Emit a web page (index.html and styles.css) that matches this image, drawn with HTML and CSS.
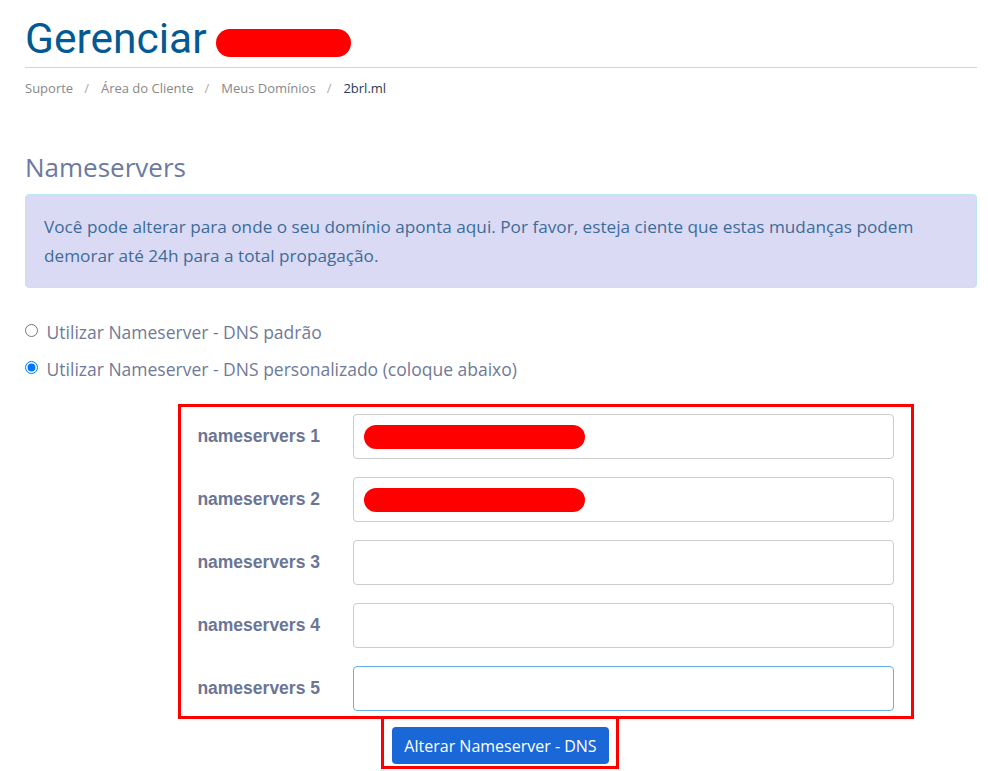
FILE: index.html
```html
<!DOCTYPE html>
<html lang="pt-BR">
<head>
    <meta charset="UTF-8">
    <meta name="viewport" content="width=device-width, initial-scale=1.0">
    <link rel="stylesheet" href="styles.css">
    <title>Gerenciar Domínio</title>
</head>
<body>
    <div class="page">
        <div class="page-header">
            <h1 class="title">Gerenciar <span class="redact title-redact"></span></h1>
        </div>

        <ol class="breadcrumb">
            <li><a href="#">Suporte</a></li>
            <li><a href="#">Área do Cliente</a></li>
            <li><a href="#">Meus Domínios</a></li>
            <li class="active">2brl.ml</li>
        </ol>

        <h2 class="section-title">Nameservers</h2>

        <div class="alert">
            Você pode alterar para onde o seu domínio aponta aqui. Por favor, esteja ciente que estas mudanças podem demorar até 24h para a total propagação.
        </div>

        <form id="NsForm">
            <label class="radio"><input type="radio" name="nschoice" value="default"> Utilizar Nameserver - DNS padrão</label>
            <label class="radio"><input type="radio" name="nschoice" value="custom" checked> Utilizar Nameserver - DNS personalizado (coloque abaixo)</label>

            <div class="ns-box">
                <div class="ns-row">
                    <label for="ns1">nameservers 1</label>
                    <div class="field">
                        <input type="text" id="ns1" name="ns1">
                        <span class="redact field-redact"></span>
                    </div>
                </div>
                <div class="ns-row">
                    <label for="ns2">nameservers 2</label>
                    <div class="field">
                        <input type="text" id="ns2" name="ns2">
                        <span class="redact field-redact"></span>
                    </div>
                </div>
                <div class="ns-row">
                    <label for="ns3">nameservers 3</label>
                    <div class="field"><input type="text" id="ns3" name="ns3"></div>
                </div>
                <div class="ns-row">
                    <label for="ns4">nameservers 4</label>
                    <div class="field"><input type="text" id="ns4" name="ns4"></div>
                </div>
                <div class="ns-row">
                    <label for="ns5">nameservers 5</label>
                    <div class="field"><input type="text" id="ns5" name="ns5" class="focused"></div>
                </div>
            </div>

            <div class="btn-box">
                <input type="submit" class="btn" value="Alterar Nameserver - DNS">
            </div>
        </form>
    </div>
</body>
</html>
```

FILE: styles.css
```css
body {
    margin: 0;
    padding: 0;
    background-color: #fff;
    font-family: "Open Sans", sans-serif;
    color: #6f7a98;
}

.page {
    padding: 0 11px 0 25px;
}

.page-header {
    border-bottom: 1px solid #d5d5d5;
}

.title {
    margin: 0;
    padding-top: 14px;
    height: 53px;
    font-family: Roboto, sans-serif;
    font-size: 42.5px;
    font-weight: 400;
    line-height: 50px;
    color: #035a92;
}

.redact {
    display: inline-block;
    background-color: #ff0000;
    border-radius: 14px;
}

.title-redact {
    width: 135px;
    height: 28px;
    vertical-align: -4px;
    margin-left: -1px;
}

.breadcrumb {
    list-style: none;
    margin: 0;
    padding: 11px 0 0;
    display: flex;
    font-size: 13px;
    line-height: 18px;
}

.breadcrumb li + li::before {
    content: "/";
    color: #aaa;
    padding: 0 12px 0 11px;
}

.breadcrumb a {
    color: #888;
    text-decoration: none;
}

.breadcrumb .active {
    color: #2e3a55;
}

.section-title {
    margin: 52px 0 0;
    font-size: 26px;
    font-weight: 400;
    line-height: 36px;
    color: #6b7a9e;
}

.alert {
    margin-top: 9px;
    padding: 17px 18px;
    background-color: #dadaf5;
    border: 1px solid #bde6f0;
    border-radius: 4px;
    color: #3e6c98;
    font-size: 17.2px;
    line-height: 29px;
}

form {
    margin-top: 34px;
}

.radio {
    display: block;
    font-size: 17.5px;
    line-height: 20px;
    margin-bottom: 17px;
    color: #6f7a98;
}

.radio input {
    margin: 0 4px 0 0;
    vertical-align: 2px;
}

.ns-box {
    margin: 25px 0 0 153px;
    width: 730px;
    border: 3px solid #ff0000;
    padding: 7px 0 3px;
    height: 299px;
}

.ns-row {
    display: flex;
    align-items: center;
    margin-bottom: 18px;
}

.ns-row label {
    width: 139px;
    text-align: right;
    font-family: "Liberation Sans", Arial, sans-serif;
    font-weight: bold;
    font-size: 17.5px;
    color: #6b7595;
}

.field {
    position: relative;
    margin-left: 33px;
    width: 541px;
}

.field input {
    display: block;
    width: 100%;
    height: 45px;
    box-sizing: border-box;
    border: 1px solid #cccccc;
    border-radius: 4px;
    padding: 6px 12px;
    font-size: 14px;
}

.field input.focused {
    border-color: #66afe9;
}

.field-redact {
    position: absolute;
    left: 11px;
    top: 11px;
    width: 221px;
    height: 24px;
    border-radius: 12px;
}

.btn-box {
    margin: -3px 0 0 356px;
    width: 232px;
    height: 47px;
    border: 3px solid #ff0000;
    padding: 0;
}

.btn {
    margin: 8px 0 0 8px;
    width: 217px;
    height: 37px;
    background-color: #1a67d7;
    color: #fff;
    border: none;
    border-radius: 4px;
    font-family: "Open Sans", sans-serif;
    font-size: 16px;
    cursor: pointer;
}
```
